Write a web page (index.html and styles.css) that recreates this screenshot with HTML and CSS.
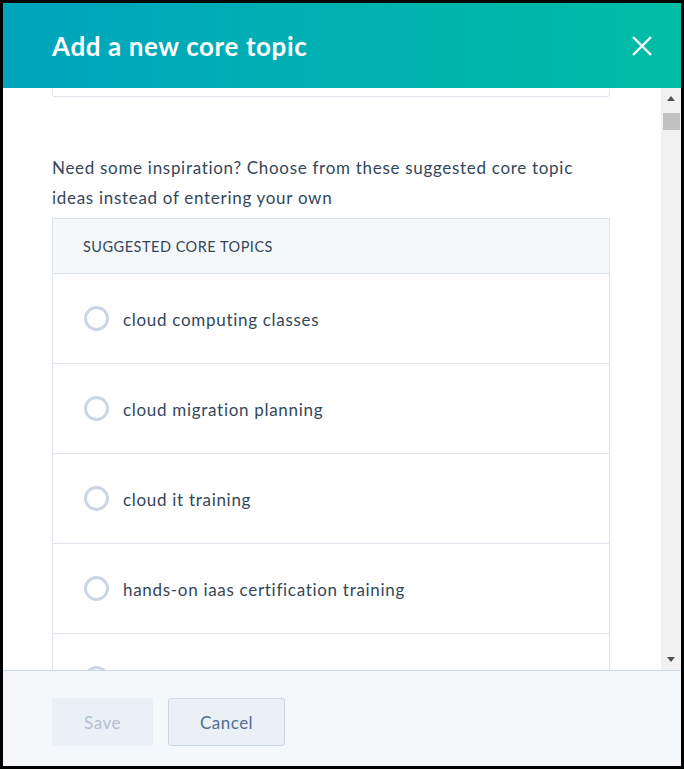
FILE: index.html
```html
<!doctype html>
<html lang="en">
    <head>
        <title>Add a new core topic</title>
        <meta charset="UTF-8"/>
        <link rel="stylesheet" href="styles.css">
    </head>
    <body>
        <div class="modal">
            <div class="modal-header">
                <h1>Add a new core topic</h1>
                <button class="close-button" aria-label="Close">
                    <svg width="22" height="22" viewBox="0 0 22 22"><path d="M2 2 L20 20 M20 2 L2 20" stroke="#ffffff" stroke-width="2.4" fill="none"/></svg>
                </button>
            </div>
            <div class="modal-body">
                <div class="scroll-content">
                    <div class="input-stub"></div>
                    <p class="hint">Need some inspiration? Choose from these suggested core topic ideas instead of entering your own</p>
                    <div class="topics">
                        <div class="topics-header">Suggested core topics</div>
                        <label class="topic"><span class="radio"></span>cloud computing classes</label>
                        <label class="topic"><span class="radio"></span>cloud migration planning</label>
                        <label class="topic"><span class="radio"></span>cloud it training</label>
                        <label class="topic"><span class="radio"></span>hands-on iaas certification training</label>
                        <label class="topic"><span class="radio"></span>cloud architecture courses</label>
                    </div>
                </div>
                <div class="scrollbar">
                    <span class="arrow-up"></span>
                    <span class="thumb"></span>
                    <span class="track"></span>
                    <span class="arrow-down"></span>
                </div>
            </div>
            <div class="modal-footer">
                <button class="save-button" disabled>Save</button>
                <button class="cancel-button">Cancel</button>
            </div>
        </div>
    </body>
</html>
```

FILE: styles.css
```css
body {
    margin: 0;
    padding: 3px;
    background-color: #000000;
    font-family: Lato, "Open Sans", sans-serif;
    color: #33475b;
}
.modal {
    width: 678px;
    height: 763px;
    display: flex;
    flex-direction: column;
    background-color: #ffffff;
}
.modal-header {
    height: 85px;
    flex-shrink: 0;
    display: flex;
    align-items: center;
    justify-content: space-between;
    padding: 0 28px 0 49px;
    background: linear-gradient(to right, #00a4bd, #00bda5);
}
.modal-header h1 {
    margin: 0;
    font-size: 26px;
    font-weight: 700;
    letter-spacing: 0.6px;
    color: #ffffff;
}
.close-button {
    border: 0;
    padding: 0;
    background: none;
    display: flex;
    cursor: pointer;
}
.modal-body {
    flex-grow: 1;
    display: flex;
    overflow: hidden;
}
.scroll-content {
    flex-grow: 1;
    padding: 0 51px 0 49px;
    overflow: hidden;
}
.input-stub {
    height: 8px;
    border: 1px solid #dfe3eb;
    border-top: 0;
    border-radius: 0 0 3px 3px;
}
.hint {
    margin: 56px 0 5px;
    font-size: 17px;
    letter-spacing: 0.7px;
    line-height: 30px;
}
.topics {
    border: 1px solid #dfe3eb;
}
.topics-header {
    height: 54px;
    display: flex;
    align-items: center;
    padding-left: 30px;
    background-color: #f5f8fa;
    border-bottom: 1px solid #dfe3eb;
    font-size: 14.5px;
    letter-spacing: 0.5px;
    text-transform: uppercase;
}
.topic {
    height: 89px;
    display: flex;
    align-items: center;
    padding: 2px 0 0 31px;
    box-sizing: border-box;
    height: 90px;
    border-bottom: 1px solid #dfe3eb;
    font-size: 17px;
    letter-spacing: 0.7px;
    cursor: pointer;
}
.radio {
    width: 19px;
    height: 19px;
    margin: -2px 14px 0 0;
    border: 3px solid #cbd6e2;
    border-radius: 50%;
    flex-shrink: 0;
}
.scrollbar {
    width: 20px;
    flex-shrink: 0;
    display: flex;
    flex-direction: column;
    align-items: center;
    background-color: #f1f1f1;
}
.arrow-up {
    margin-top: 8px;
    border: 4px solid transparent;
    border-top: 0;
    border-bottom: 5px solid #505050;
}
.thumb {
    width: 17px;
    height: 17px;
    margin-top: 12px;
    background-color: #c1c1c1;
}
.track {
    flex-grow: 1;
}
.arrow-down {
    margin-bottom: 8px;
    border: 4px solid transparent;
    border-bottom: 0;
    border-top: 5px solid #505050;
}
.modal-footer {
    height: 96px;
    flex-shrink: 0;
    display: flex;
    align-items: flex-start;
    gap: 15px;
    padding: 27px 49px 0;
    box-sizing: border-box;
    background-color: #f5f8fa;
    border-top: 1px solid #cbd6e2;
}
button.save-button,
button.cancel-button {
    height: 48px;
    font-family: Lato, "Open Sans", sans-serif;
    font-size: 17px;
    letter-spacing: 0.5px;
    border-radius: 3px;
    border: 1px solid #cbd6e2;
    background-color: #eaf0f6;
    color: #506e91;
    cursor: pointer;
}
.save-button {
    width: 101px;
}
.cancel-button {
    width: 117px;
}
.save-button[disabled] {
    border-color: #eaf0f6;
    color: #b0c1d4;
    cursor: default;
}
```
